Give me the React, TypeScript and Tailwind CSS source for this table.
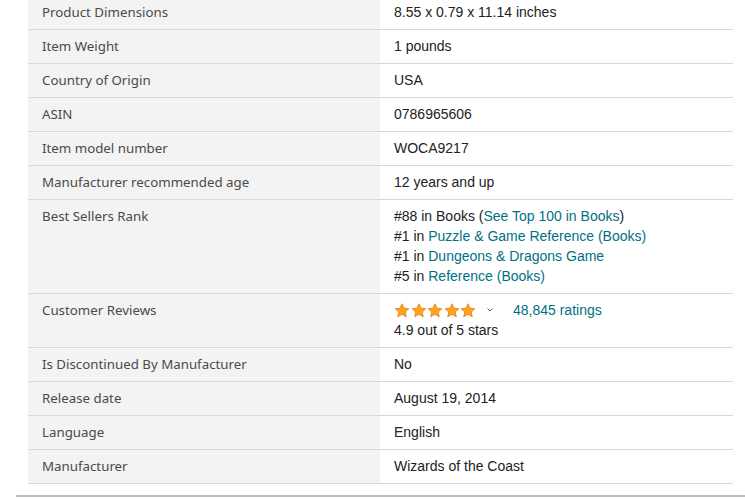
import React, { FC } from "react";

type Row = { label: string; value: React.ReactNode };

const Link: FC<{ children: React.ReactNode }> = ({ children }) => (
  <span className="text-[#007185]">{children}</span>
);

const Star: FC = () => (
  <svg width="16" height="15" viewBox="0 0 24 23" className="block">
    <path
      d="M12 1.2l3.1 6.9 7.4.7-5.6 5 1.7 7.4L12 17.3l-6.6 3.9 1.7-7.4-5.6-5 7.4-.7z"
      fill="#FFA41C"
      stroke="#E47911"
      strokeWidth="1.2"
      strokeLinejoin="round"
    />
  </svg>
);

const rows: Row[] = [
  { label: "Product Dimensions", value: "8.55 x 0.79 x 11.14 inches" },
  { label: "Item Weight", value: "1 pounds" },
  { label: "Country of Origin", value: "USA" },
  { label: "ASIN", value: "0786965606" },
  { label: "Item model number", value: "WOCA9217" },
  { label: "Manufacturer recommended age", value: "12 years and up" },
  {
    label: "Best Sellers Rank",
    value: (
      <div className="flex flex-col">
        <span>
          #88 in Books (<Link>See Top 100 in Books</Link>)
        </span>
        <span>
          #1 in <Link>Puzzle &amp; Game Reference (Books)</Link>
        </span>
        <span>
          #1 in <Link>Dungeons &amp; Dragons Game</Link>
        </span>
        <span>
          #5 in <Link>Reference (Books)</Link>
        </span>
      </div>
    ),
  },
  {
    label: "Customer Reviews",
    value: (
      <div className="flex flex-col">
        <div className="flex items-center h-5">
          <div className="flex gap-[0.5px]">
            <Star />
            <Star />
            <Star />
            <Star />
            <Star />
          </div>
          <svg width="8" height="6" viewBox="0 0 8 6" className="ml-[10px]">
            <path d="M1.5 1.5L4 4l2.5-2.5" fill="none" stroke="#666" strokeWidth="1" />
          </svg>
          <span className="ml-[19px]">
            <Link>48,845 ratings</Link>
          </span>
        </div>
        <span>4.9 out of 5 stars</span>
      </div>
    ),
  },
  { label: "Is Discontinued By Manufacturer", value: "No" },
  { label: "Release date", value: "August 19, 2014" },
  { label: "Language", value: "English" },
  { label: "Manufacturer", value: "Wizards of the Coast" },
];

const App: FC = () => {
  return (
    <div className="w-[745px] h-[500px] overflow-hidden bg-white">
      <div className="mt-[-4px] ml-[28px] w-[705px]">
        {rows.map((r) => (
          <div key={r.label} className="flex border-b border-[#d5d9d9]">
            <div
              className="w-[352px] shrink-0 bg-[#f3f3f3] px-[14px] pt-[6px] pb-[7px] text-[13.3px] leading-5 text-[#4a4a4a]"
              style={{ fontFamily: '"Noto Sans", "Open Sans", sans-serif' }}
            >
              {r.label}
            </div>
            <div
              className="flex-1 px-[14px] pt-[6px] pb-[7px] text-[14px] leading-5 text-[#222]"
              style={{ fontFamily: '"Liberation Sans", Arial, sans-serif' }}
            >
              {r.value}
            </div>
          </div>
        ))}
      </div>
      <div className="mt-[11px] ml-[16px] h-[2px] bg-[#bbbfbf]" />
    </div>
  );
};

export default App;
